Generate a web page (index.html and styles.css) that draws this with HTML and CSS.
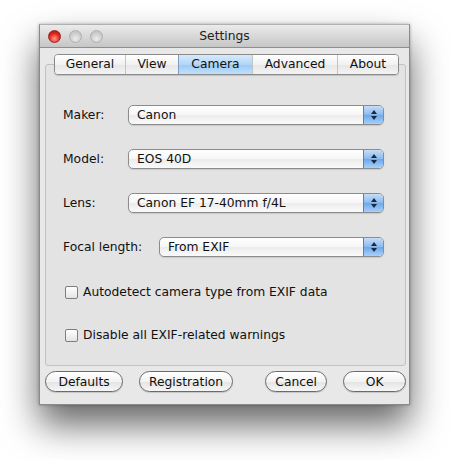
FILE: index.html
```html
<!DOCTYPE html>
<html lang="en">
<head>
    <meta charset="UTF-8">
    <title>Settings</title>
    <link rel="stylesheet" href="styles.css">
</head>
<body>
    <div class="window">
        <div class="titlebar">
            <div class="lights">
                <span class="light close"></span>
                <span class="light"></span>
                <span class="light"></span>
            </div>
            <div class="title">Settings</div>
        </div>

        <div class="content">
            <div class="tabs">
                <span class="tab tab-general">General</span>
                <span class="tab tab-view">View</span>
                <span class="tab tab-camera active">Camera</span>
                <span class="tab tab-advanced">Advanced</span>
                <span class="tab tab-about">About</span>
            </div>

            <div class="group">
                <div class="row">
                    <span class="label">Maker:</span>
                    <div class="popup"><span>Canon</span><i class="arrows"></i></div>
                </div>
                <div class="row">
                    <span class="label">Model:</span>
                    <div class="popup"><span>EOS 40D</span><i class="arrows"></i></div>
                </div>
                <div class="row">
                    <span class="label">Lens:</span>
                    <div class="popup"><span>Canon EF 17-40mm f/4L</span><i class="arrows"></i></div>
                </div>
                <div class="row">
                    <span class="label label-wide">Focal length:</span>
                    <div class="popup"><span>From EXIF</span><i class="arrows"></i></div>
                </div>
                <label class="check"><span class="box"></span>Autodetect camera type from EXIF data</label>
                <label class="check"><span class="box"></span>Disable all EXIF-related warnings</label>
            </div>

            <div class="buttons">
                <button class="btn btn-defaults">Defaults</button>
                <button class="btn btn-reg">Registration</button>
                <span class="spacer"></span>
                <button class="btn btn-cancel">Cancel</button>
                <button class="btn btn-ok">OK</button>
            </div>
        </div>
    </div>
</body>
</html>
```

FILE: styles.css
```css
html {
    background-color: #fff;
}

body {
    margin: 0;
    padding: 24px 0 55px 39px;
    min-height: 460px;
    box-sizing: border-box;
    font-family: "DejaVu Sans", "Noto Sans", sans-serif;
    font-size: 12.3px;
    color: #111;
}

.window {
    width: 371px;
    height: 381px;
    box-sizing: border-box;
    background-color: #e8e8e8;
    border: 1px solid #8a8a8a;
    border-top-color: #b0b0b0;
    box-shadow: 0 20px 34px rgba(0, 0, 0, 0.6), 0 0 3px rgba(0, 0, 0, 0.3);
    display: flex;
    flex-direction: column;
}

.titlebar {
    height: 22px;
    display: flex;
    align-items: center;
    background: linear-gradient(#ebebeb, #c6c6c6);
    border-bottom: 1px solid #8e8e8e;
    position: relative;
}

.lights {
    display: flex;
    gap: 8px;
    padding-left: 8px;
}

.light {
    width: 13px;
    height: 13px;
    border-radius: 50%;
    box-sizing: border-box;
    border: 1px solid #b0b0b0;
    background: radial-gradient(circle at 50% 70%, #ececec, #c6c6c6 70%);
}

.light.close {
    border-color: #a02020;
    background: radial-gradient(circle at 50% 70%, #ff9a8a, #e0261c 55%, #9c0f0a);
}

.title {
    position: absolute;
    left: 0;
    right: 0;
    text-align: center;
    color: #222;
}

.content {
    flex: 1;
    display: flex;
    flex-direction: column;
    padding: 6px 3px 0 5px;
}

.tabs {
    display: flex;
    align-self: flex-start;
    margin-left: 9px;
    position: relative;
    z-index: 1;
    border: 1px solid #8a8a8a;
    border-radius: 4px;
    box-shadow: 0 1px 1px rgba(0, 0, 0, 0.15);
    overflow: hidden;
}

.tab {
    height: 19px;
    line-height: 19px;
    text-align: center;
    background: linear-gradient(#ffffff, #f1f1f1 50%, #e6e6e6 52%, #f4f4f4);
    border-left: 1px solid #c4c4c4;
}

.tab:first-child {
    border-left: none;
}

.tab-general { width: 70px; }
.tab-view { width: 52px; }
.tab-camera { width: 73px; }
.tab-advanced { width: 84px; }
.tab-about { width: 60px; }

.tab.active {
    background: linear-gradient(#d6e9fb, #b3d6f7 50%, #9ccaf4 52%, #c2e0fb);
    border-left-color: #7d9cc4;
}

.group {
    margin-top: -11px;
    height: 302px;
    box-sizing: border-box;
    border: 1px solid #c2c2c2;
    border-radius: 3px;
    background-color: #e3e3e3;
    padding: 40px 21px 0 17px;
    display: flex;
    flex-direction: column;
}

.row {
    display: flex;
    align-items: center;
    height: 20px;
    margin-bottom: 24px;
}

.label {
    width: 65px;
    flex-shrink: 0;
}

.label-wide {
    width: 96px;
}

.popup {
    flex: 1;
    height: 20px;
    box-sizing: border-box;
    border: 1px solid #8c8c8c;
    border-radius: 5px;
    background: linear-gradient(#ffffff, #f6f6f6 50%, #ececec 52%, #fafafa);
    display: flex;
    align-items: center;
    overflow: hidden;
    box-shadow: 0 1px 1px rgba(0, 0, 0, 0.12);
}

.popup span {
    flex: 1;
    padding-left: 8px;
}

.arrows {
    width: 19px;
    height: 100%;
    border-left: 1px solid #5f7fb0;
    background: linear-gradient(#c6ddf7, #89b9ef 50%, #6da8ec 52%, #a9d0fa);
    position: relative;
}

.arrows::before,
.arrows::after {
    content: "";
    position: absolute;
    left: 7px;
    border-left: 3px solid transparent;
    border-right: 3px solid transparent;
}

.arrows::before {
    top: 4px;
    border-bottom: 4px solid #1c2a40;
}

.arrows::after {
    bottom: 4px;
    border-top: 4px solid #1c2a40;
}

.check {
    display: flex;
    align-items: center;
    gap: 5px;
    margin-left: 2px;
    height: 14px;
}

.check:first-of-type {
    margin-top: 4px;
    margin-bottom: 29px;
}

.box {
    width: 13px;
    height: 13px;
    box-sizing: border-box;
    border: 1px solid #7e7e7e;
    border-radius: 2px;
    background: linear-gradient(#fefefe, #e4e4e4);
}

.buttons {
    display: flex;
    align-items: center;
    gap: 16px;
    margin-top: 5px;
}

.spacer {
    flex: 1;
}

.btn {
    font-family: inherit;
    font-size: 12.3px;
    color: #111;
    height: 21px;
    padding: 0;
    border: 1px solid #6a6a6a;
    border-radius: 11px;
    background: linear-gradient(#ffffff, #f3f3f3 50%, #e4e4e4 52%, #f6f6f6);
    box-shadow: 0 1px 1px rgba(0, 0, 0, 0.15);
}

.btn-defaults { width: 80px; }
.btn-reg { width: 96px; }
.btn-cancel { width: 64px; }
.btn-ok { width: 64px; }
```
